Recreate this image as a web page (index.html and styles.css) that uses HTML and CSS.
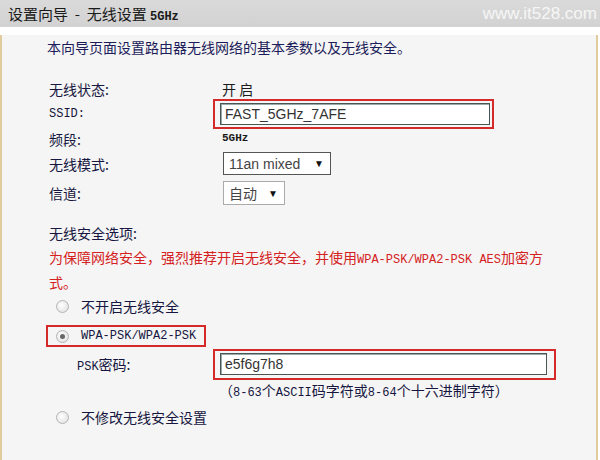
FILE: index.html
```html
<!DOCTYPE html>
<html lang="zh-CN">
<head>
    <meta charset="UTF-8">
    <title>设置向导 - 无线设置 5GHz</title>
    <link rel="stylesheet" href="styles.css">
</head>
<body>
    <div class="header">
        <span class="title">设置向导&nbsp; - &nbsp;无线设置 <span class="band">5GHz</span></span>
        <span class="mark">www.it528.com</span>
    </div>
    <div class="panel">
        <p class="intro">本向导页面设置路由器无线网络的基本参数以及无线安全。</p>

        <div class="row">
            <span class="label">无线状态:</span>
            <span class="value">开 启</span>
        </div>
        <div class="row">
            <span class="label en">SSID:</span>
            <span class="mark-box ssid-box"><input class="text" type="text" value="FAST_5GHz_7AFE"></span>
        </div>
        <div class="row">
            <span class="label">频段:</span>
            <span class="value en freq">5GHz</span>
        </div>
        <div class="row">
            <span class="label">无线模式:</span>
            <span class="select mode">11an mixed <i class="arrow">▼</i></span>
        </div>
        <div class="row tall">
            <span class="label">信道:</span>
            <span class="select channel">自动 <i class="arrow">▼</i></span>
        </div>

        <p class="sec-title">无线安全选项:</p>
        <p class="warn">为保障网络安全，强烈推荐开启无线安全，并使用<span class="en">WPA-PSK/WPA2-PSK AES</span>加密方式。</p>

        <div class="opt">
            <span class="radio"></span>
            <span>不开启无线安全</span>
        </div>
        <div class="opt wpa">
            <span class="radio checked"></span>
            <span class="en">WPA-PSK/WPA2-PSK</span>
        </div>
        <div class="psk">
            <span class="psk-label"><span class="en">PSK</span>密码:</span>
            <span class="mark-box psk-box"><input class="text" type="text" value="e5f6g7h8"></span>
        </div>
        <p class="hint">（<span class="en">8-63</span>个<span class="en">ASCII</span>码字符或<span class="en">8-64</span>个十六进制字符）</p>
        <div class="opt last">
            <span class="radio"></span>
            <span>不修改无线安全设置</span>
        </div>
    </div>
</body>
</html>
```

FILE: styles.css
```css
body { margin: 0; background: #fff; font-family: "Noto Sans CJK SC", sans-serif; font-size: 14px; color: #161640; }
p { margin: 0; }

.header { height: 27px; background: linear-gradient(#dadada, #d2d2d2); display: flex; justify-content: space-between; align-items: center; padding: 0 3px 0 8px; }
.title { font-size: 15px; color: #1a1a1a; }
.band { font-family: "Liberation Mono", monospace; font-size: 12px; font-weight: bold; }
.mark { font-family: "Liberation Sans", Arial, sans-serif; font-size: 17px; color: #f6f6f6; }

.panel { height: 427px; margin-right: 2px; background: #f5f5f5; border: 2px solid #e2cc9c; border-top: none; padding-left: 45px; }

.en { font-family: "Liberation Mono", monospace; font-size: 12px; line-height: 1; }
.freq { font-weight: bold; font-size: 11px; }

.intro { height: 24px; line-height: 24px; margin: 8px 0 17px; color: #1c1c5a; }

.row { height: 25px; display: flex; align-items: center; padding-left: 2px; }
.row.tall { height: 34px; }
.label { width: 173px; flex: none; }
.value { color: #1a1a1a; }

.mark-box { border: 2px solid #d42a2a; display: inline-flex; }
.ssid-box { margin-left: -9px; padding: 2px 2px 2px 5px; }
.psk-box { margin-left: -9px; padding: 2px 7px 3px 5px; }

.text { height: 20px; border: 1px solid #4a5656; box-shadow: inset 1px 1px 0 #9aa; background: #fff; padding: 0 4px; font-family: "Liberation Sans", Arial, sans-serif; font-size: 14px; color: #333; outline: none; }
.ssid-box .text { width: 260px; }
.psk-box .text { width: 317px; }

.select { height: 21px; border: 1px solid #555; background: #fff; display: inline-flex; align-items: center; justify-content: space-between; padding: 0 6px 0 5px; margin-left: 1px; font-family: "Liberation Sans", "Noto Sans CJK SC", sans-serif; font-size: 14px; color: #444; box-sizing: border-box; }
.select.mode { width: 108px; height: 23px; }
.select.channel { width: 62px; height: 24px; border-color: #aaa; }
.arrow { font-style: normal; font-size: 10px; color: #111; }

.sec-title { height: 24px; line-height: 24px; margin-top: 11px; padding-left: 2px; }
.warn { width: 512px; line-height: 25px; color: #d42222; padding-left: 2px; }

.opt { height: 22px; display: flex; align-items: center; gap: 12px; padding-left: 9px; }
.opt.wpa { width: 148px; height: 18px; margin: 8px 0 0 -1px; padding-left: 8px; border: 2px solid #d42a2a; }
.opt.last { margin-top: 5px; }
.radio { width: 11px; height: 11px; border: 1px solid #b4b4b4; border-radius: 50%; background: radial-gradient(circle at 40% 40%, #fff, #dcdcdc); position: relative; }
.radio.checked::after { content: ""; position: absolute; left: 3px; top: 3px; width: 5px; height: 5px; border-radius: 50%; background: #666; }

.psk { height: 30px; display: flex; align-items: center; margin-top: 2px; padding-left: 30px; }
.psk-label { width: 145px; flex: none; }
.hint { height: 22px; line-height: 22px; padding-left: 172px; }
```
